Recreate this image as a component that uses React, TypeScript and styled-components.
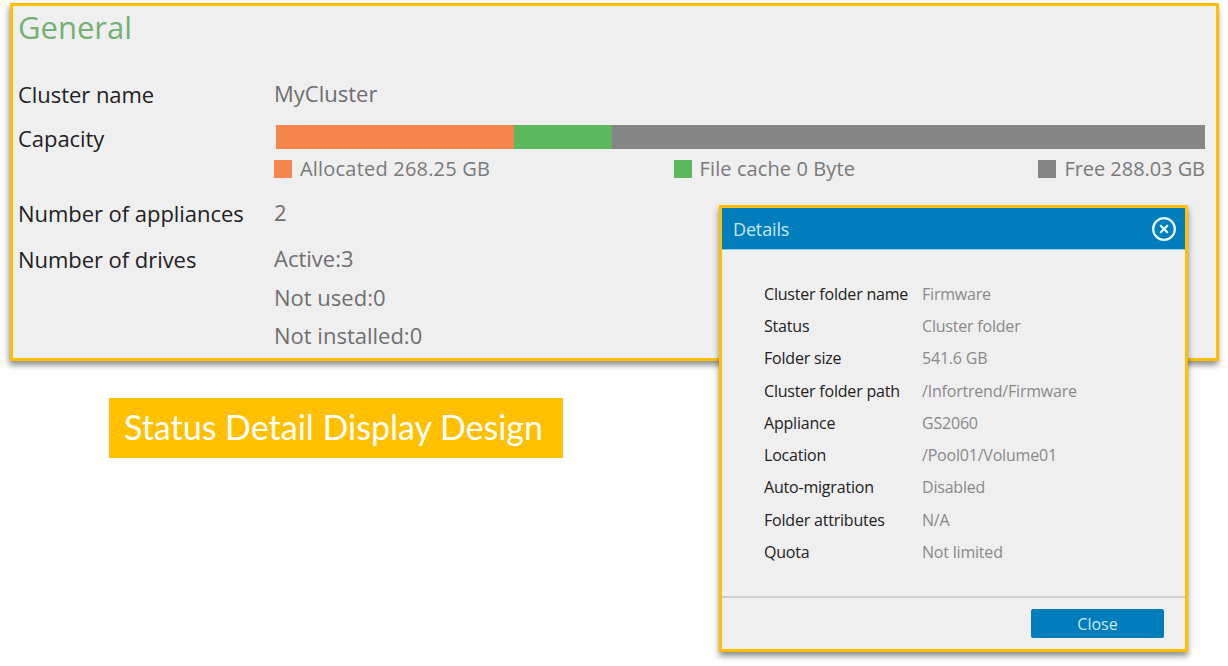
import React from "react"
import styled, { createGlobalStyle } from "styled-components"
import { CircleX } from "lucide-react"

const GlobalStyle = createGlobalStyle`
  html, body {
    margin: 0;
    padding: 0;
    background: #ffffff;
  }
  body {
    font-family: "Open Sans", "Noto Sans", sans-serif;
  }
`

const capacity = [
  { color: "#f5854d", width: 238 },
  { color: "#5cb85c", width: 98 },
  { color: "#858585", width: 593 },
]

const details = [
  ["Cluster folder name", "Firmware"],
  ["Status", "Cluster folder"],
  ["Folder size", "541.6 GB"],
  ["Cluster folder path", "/Infortrend/Firmware"],
  ["Appliance", "GS2060"],
  ["Location", "/Pool01/Volume01"],
  ["Auto-migration", "Disabled"],
  ["Folder attributes", "N/A"],
  ["Quota", "Not limited"],
]

export default function App() {
  return (
    <Page>
      <GlobalStyle />
      <GeneralPanel>
        <Title>General</Title>
        <Row>
          <Label>Cluster name</Label>
          <Value>MyCluster</Value>
        </Row>
        <CapacityRow>
          <Label>Capacity</Label>
          <div>
            <Bar>
              {capacity.map((part) => (
                <BarPart key={part.color} $color={part.color} style={{ width: part.width }} />
              ))}
            </Bar>
            <Legend>
              <LegendItem $tracking={0.2}>
                <Swatch $color="#f5854d" />
                Allocated 268.25 GB
              </LegendItem>
              <LegendItem $tracking={0.1}>
                <Swatch $color="#5cb85c" />
                File cache 0 Byte
              </LegendItem>
              <LegendItem $tracking={-0.05}>
                <Swatch $color="#858585" />
                Free 288.03 GB
              </LegendItem>
            </Legend>
          </div>
        </CapacityRow>
        <AppliancesRow>
          <Label>Number of appliances</Label>
          <Value>2</Value>
        </AppliancesRow>
        <DrivesRow>
          <Label>Number of drives</Label>
          <DriveList>
            <Value>Active:3</Value>
            <Value>Not used:0</Value>
            <Value>Not installed:0</Value>
          </DriveList>
        </DrivesRow>
      </GeneralPanel>

      <Caption>Status Detail Display Design</Caption>

      <Dialog>
        <DialogHeader>
          <DialogTitle>Details</DialogTitle>
          <CloseIcon>
            <CircleX size={26} strokeWidth={2.1} color="#e4f4fb" />
          </CloseIcon>
        </DialogHeader>
        <DialogBody>
          {details.map(([name, value]) => (
            <DetailRow key={name}>
              <DetailName>{name}</DetailName>
              <DetailValue>{value}</DetailValue>
            </DetailRow>
          ))}
        </DialogBody>
        <DialogFooter>
          <CloseButton>Close</CloseButton>
        </DialogFooter>
      </Dialog>
    </Page>
  )
}

const Page = styled.div`
  position: relative;
  width: 1228px;
  height: 666px;
  overflow: hidden;
  padding: 3px 0 0 10px;
  box-sizing: border-box;
`

const GeneralPanel = styled.section`
  box-sizing: border-box;
  width: 1209px;
  height: 358px;
  padding: 0 0 0 5px;
  background: #efefef;
  border: 3px solid #ffc000;
  box-shadow: -1px 4px 6px rgba(0, 0, 0, 0.45);
`

const Title = styled.h2`
  margin: 0 0 21px;
  height: 52px;
  font-size: 31px;
  line-height: 42px;
  font-weight: 400;
  color: #74b274;
`

const Row = styled.div`
  display: grid;
  grid-template-columns: 256px 1fr;
  line-height: 30px;
`

const CapacityRow = styled(Row)`
  margin-top: 14px;
`

const AppliancesRow = styled(Row)`
  margin-top: 19px;
`

const DrivesRow = styled(Row)`
  margin-top: 16px;
`

const Label = styled.div`
  font-size: 22px;
  line-height: 30px;
  color: #222222;
  letter-spacing: -0.05px;
  white-space: nowrap;
`

const Value = styled.div`
  font-size: 22px;
  line-height: 30px;
  color: #6f6f6f;
  margin-top: -1px;
`

const Bar = styled.div`
  display: flex;
  height: 24px;
  margin: 2px 0 0 2px;
`

const BarPart = styled.div<{ $color: string }>`
  background: ${({ $color }) => $color};
`

const Legend = styled.div`
  display: flex;
  justify-content: space-between;
  width: 931px;
  height: 20px;
  margin-top: 10px;
`

const LegendItem = styled.div<{ $tracking: number }>`
  display: flex;
  align-items: center;
  gap: 8px;
  font-size: 20px;
  line-height: 20px;
  color: #7a7a7a;
  letter-spacing: ${({ $tracking }) => $tracking}px;
  white-space: nowrap;
`

const Swatch = styled.span<{ $color: string }>`
  width: 18px;
  height: 18px;
  background: ${({ $color }) => $color};
`

const DriveList = styled.div`
  display: flex;
  flex-direction: column;
  gap: 9.5px;
`

const Caption = styled.div`
  box-sizing: border-box;
  width: 454px;
  height: 60px;
  margin: 37px 0 0 99px;
  padding-left: 15px;
  background: #ffc000;
  color: #ffffff;
  font-family: Lato, "Open Sans", sans-serif;
  font-size: 34px;
  line-height: 58px;
  white-space: nowrap;
`

const Dialog = styled.div`
  position: absolute;
  top: 205px;
  left: 719px;
  box-sizing: border-box;
  width: 469px;
  height: 447px;
  display: flex;
  flex-direction: column;
  background: #efefef;
  border: 3px solid #ffc000;
  box-shadow: 0 4px 6px rgba(0, 0, 0, 0.45);
`

const DialogHeader = styled.header`
  display: flex;
  align-items: center;
  justify-content: space-between;
  height: 42px;
  padding: 0 8px 0 11px;
  background: #007dba;
  border-bottom: 1px solid #8ccbe6;
  box-sizing: border-box;
`

const DialogTitle = styled.span`
  font-size: 18px;
  color: #c6e8f8;
  letter-spacing: -0.15px;
`

const CloseIcon = styled.span`
  display: flex;
`

const DialogBody = styled.div`
  flex: 1;
  padding: 27.7px 0 0 42px;
`

const DetailRow = styled.div`
  display: grid;
  grid-template-columns: 158px 1fr;
  height: 32.25px;
  align-items: center;
`

const DetailName = styled.span`
  font-size: 16px;
  color: #222222;
  letter-spacing: -0.2px;
  white-space: nowrap;
`

const DetailValue = styled.span`
  font-size: 16px;
  color: #8a8a8a;
  letter-spacing: -0.2px;
  white-space: nowrap;
`

const DialogFooter = styled.footer`
  display: flex;
  justify-content: flex-end;
  box-sizing: border-box;
  height: 53px;
  padding: 11px 21px 0 0;
  border-top: 2px solid #cccccc;
`

const CloseButton = styled.button`
  width: 133px;
  height: 29px;
  padding: 0;
  border: none;
  border-radius: 2px;
  background: #007dba;
  color: #cdeaf8;
  font-family: inherit;
  font-size: 16px;
`
